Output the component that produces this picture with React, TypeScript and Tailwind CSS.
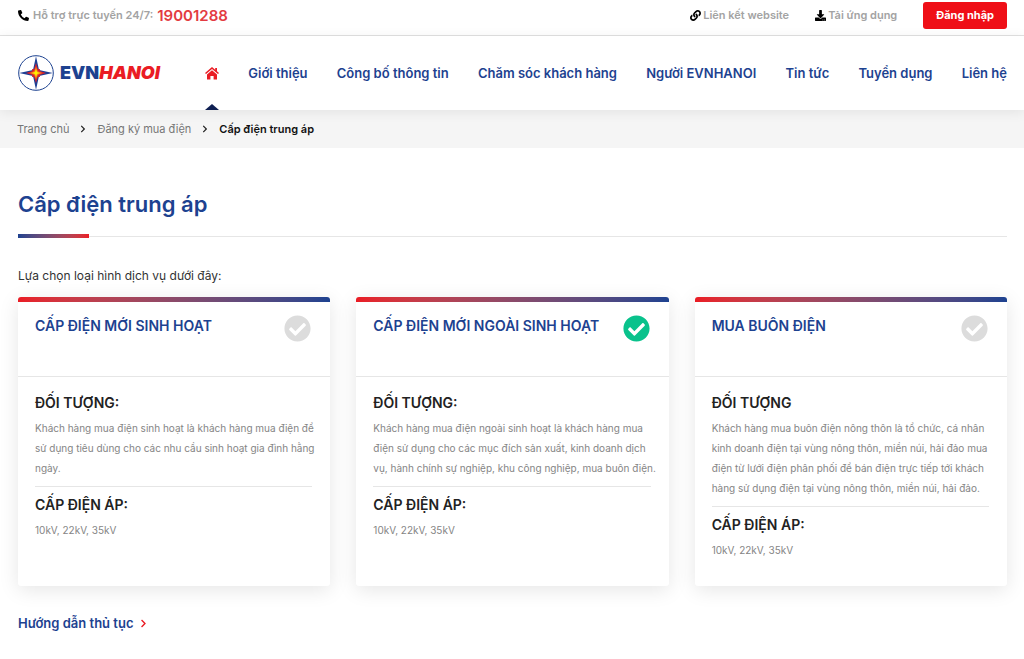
import { useState } from "react";
import { FaPhoneAlt, FaLink, FaDownload, FaCheckCircle, FaChevronRight } from "react-icons/fa";

const navLinks = [
  "Giới thiệu",
  "Công bố thông tin",
  "Chăm sóc khách hàng",
  "Người EVNHANOI",
  "Tin tức",
  "Tuyển dụng",
  "Liên hệ",
];

const services = [
  {
    id: "sinh-hoat",
    title: "CẤP ĐIỆN MỚI SINH HOẠT",
    heading: "ĐỐI TƯỢNG:",
    text: "Khách hàng mua điện sinh hoạt là khách hàng mua điện để sử dụng tiêu dùng cho các nhu cầu sinh hoạt gia đình hằng ngày.",
  },
  {
    id: "ngoai-sinh-hoat",
    title: "CẤP ĐIỆN MỚI NGOÀI SINH HOẠT",
    heading: "ĐỐI TƯỢNG:",
    text: "Khách hàng mua điện ngoài sinh hoạt là khách hàng mua điện sử dụng cho các mục đích sản xuất, kinh doanh dịch vụ, hành chính sự nghiệp, khu công nghiệp, mua buôn điện.",
  },
  {
    id: "mua-buon",
    title: "MUA BUÔN ĐIỆN",
    heading: "ĐỐI TƯỢNG",
    text: "Khách hàng mua buôn điện nông thôn là tổ chức, cá nhân kinh doanh điện tại vùng nông thôn, miền núi, hải đảo mua điện từ lưới điện phân phối để bán điện trực tiếp tới khách hàng sử dụng điện tại vùng nông thôn, miền núi, hải đảo.",
  },
];

function Logo() {
  return (
    <a href="#" className="flex items-center gap-[6px]">
      <svg viewBox="0 0 36 36" className="size-9" aria-hidden="true">
        <circle cx="18" cy="18" r="17.3" fill="#fff" stroke="#1d4290" strokeWidth="1" />
        <path d="M18 1.2l3 13.8 13.8 3-13.8 3-3 13.8-3-13.8-13.8-3 13.8-3z" fill="#1d3f94" />
        <path d="M18 8l1.9 6.2 2.1-.2-.2 2.1L28 18l-6.2 1.9.2 2.1-2.1-.2L18 28l-1.9-6.2-2.1.2.2-2.1L8 18l6.2-1.9-.2-2.1 2.1.2z" fill="#d8202c" />
        <path d="M18 11.5l1.8 4.7 4.7 1.8-4.7 1.8-1.8 4.7-1.8-4.7-4.7-1.8 4.7-1.8z" fill="#f58220" />
        <path d="M18 14l1 3 3 1-3 1-1 3-1-3-3-1 3-1z" fill="#fff200" />
      </svg>
      <span className="text-lg font-black leading-none text-[#1d4290]">
        EVN<span className="italic text-[#ea1c24]">HANOI</span>
      </span>
    </a>
  );
}

function HomeIcon() {
  return (
    <svg viewBox="0 0 14 13" className="w-[14px]" fill="#ea1c24" aria-hidden="true">
      <path d="M7 0L0 6l1 1.1L7 2l6 5.1L14 6l-2-1.7V1h-1.8v1.8z" />
      <path d="M7 3.2l5 4.3V12.5H8.6V9H5.4v3.5H2V7.5z" />
    </svg>
  );
}

function TopBar() {
  return (
    <div className="border-b border-[#e2e2e2]">
      <div className="flex h-[35px] items-center justify-between pb-1 pl-[18px] pr-[17px] text-[11px] font-semibold text-[#a3a3a3]">
        <div className="flex items-center gap-1">
          <FaPhoneAlt size={11} className="text-black" />
          <span>Hỗ trợ trực tuyến 24/7:</span>
          <a href="tel:19001288" className="text-[15px] font-semibold leading-none text-[#e33b41]">
            19001288
          </a>
        </div>
        <div className="flex items-center gap-[26px]">
          <a href="#" className="flex items-center gap-[2px]">
            <FaLink size={11} className="text-black" />
            Liên kết website
          </a>
          <a href="#" className="flex items-center gap-[2px]">
            <FaDownload size={11} className="text-black" />
            Tải ứng dụng
          </a>
          <button className="h-[27px] rounded-[3px] bg-[#ef0f17] px-[13px] font-bold text-white">
            Đăng nhập
          </button>
        </div>
      </div>
    </div>
  );
}

function Navbar() {
  return (
    <header className="relative flex h-[74px] items-center justify-between bg-white pl-[18px] pr-[17px] shadow-[0_2px_12px_rgba(0,0,0,0.08)]">
      <Logo />
      <nav className="ml-[45px] flex flex-1 items-center justify-between self-stretch pt-px text-[13px] font-semibold text-[#1d4290]">
        <a href="#" aria-label="Trang chủ" className="relative flex h-full items-center">
          <HomeIcon />
          <span className="absolute bottom-0 left-0 border-x-[7px] border-b-[6px] border-x-transparent border-b-[#0f1f52]" />
        </a>
        {navLinks.map((label) => (
          <a key={label} href="#">
            {label}
          </a>
        ))}
      </nav>
    </header>
  );
}

function Breadcrumb() {
  return (
    <nav className="flex h-[38px] items-center gap-[10px] bg-[#f5f5f5] px-[17px] text-[11px] text-[#777]">
      <a href="#">Trang chủ</a>
      <FaChevronRight size={8} className="text-[#222]" />
      <a href="#">Đăng ký mua điện</a>
      <FaChevronRight size={8} className="text-[#222]" />
      <span className="font-semibold text-[#111]">Cấp điện trung áp</span>
    </nav>
  );
}

type CardProps = {
  service: (typeof services)[number];
  checked: boolean;
  onSelect: () => void;
};

function ServiceCard({ service, checked, onSelect }: CardProps) {
  return (
    <label className="flex min-h-[289px] cursor-pointer flex-col overflow-hidden rounded-[3px] bg-white shadow-[0_4px_20px_rgba(0,0,0,0.1)]">
      <span className="h-[5px] bg-linear-to-r from-[#ea1c24] to-[#1d4290]" />
      <span className="flex h-[75px] items-start justify-between border-b border-[#e6e6e6] pl-[17px] pr-[19px] pt-[13px]">
        <span className="pt-px text-sm font-semibold leading-5 text-[#1d4290]">{service.title}</span>
        <input type="radio" name="service" className="peer sr-only" checked={checked} onChange={onSelect} />
        <FaCheckCircle size={27} className="shrink-0 text-[#dcdcdc] peer-checked:text-[#09c28c]" />
      </span>
      <span className="block pl-[17px] pr-[10px] pt-4 text-[10px] leading-5 text-[#858585]">
        <span className="block text-sm font-semibold leading-5 text-[#222]">{service.heading}</span>
        <span className="mt-[5px] block">{service.text}</span>
        <span className="mr-2 mt-2 block h-px bg-[#e6e6e6]" />
        <span className="mt-2 block text-sm font-semibold leading-5 text-[#222]">CẤP ĐIỆN ÁP:</span>
        <span className="mt-[5px] block">10kV, 22kV, 35kV</span>
      </span>
    </label>
  );
}

export default function App() {
  const [selected, setSelected] = useState("ngoai-sinh-hoat");

  return (
    <div className="min-h-screen bg-white font-['Inter',sans-serif]">
      <TopBar />
      <Navbar />
      <Breadcrumb />
      <main className="pl-[18px] pr-[17px] pt-10">
        <h1 className="text-[22px] font-semibold leading-8 text-[#1d4290]">Cấp điện trung áp</h1>
        <div className="mt-[14px] flex items-center">
          <span className="h-1 w-[71px] bg-linear-to-r from-[#1d4290] to-[#ea1c24]" />
          <span className="h-px flex-1 bg-[#e6e6e6]" />
        </div>
        <p className="mt-7 text-xs leading-5 text-[#333]">Lựa chọn loại hình dịch vụ dưới đây:</p>
        <div className="mt-[11px] grid grid-cols-3 gap-[26px]">
          {services.map((service) => (
            <ServiceCard
              key={service.id}
              service={service}
              checked={selected === service.id}
              onSelect={() => setSelected(service.id)}
            />
          ))}
        </div>
        <a href="#" className="mt-[27px] inline-flex items-center gap-[6px] text-[13px] font-semibold leading-5 text-[#1d4290]">
          Hướng dẫn thủ tục
          <FaChevronRight size={9} className="text-[#ea1c24]" />
        </a>
      </main>
    </div>
  );
}
